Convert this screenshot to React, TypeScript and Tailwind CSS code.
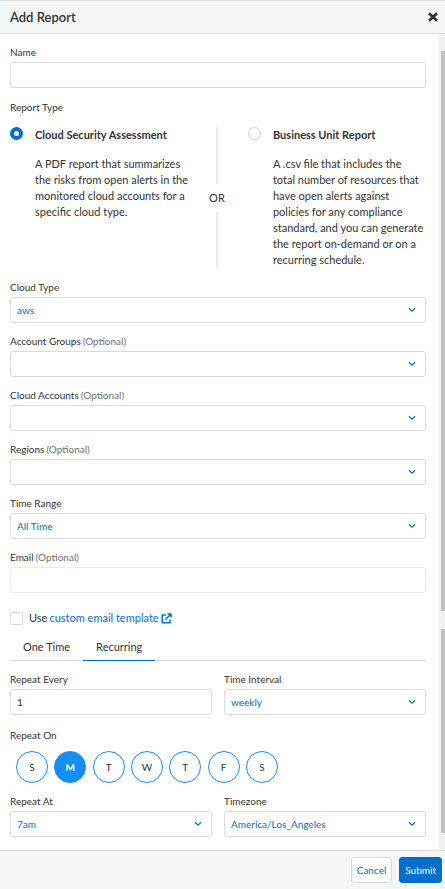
import { useState } from "react";
import type { ReactNode } from "react";

const BOX =
  "block h-[26px] w-full rounded-[3px] border bg-white px-1.5 text-[10px] leading-4 outline-none focus:border-[#148ef5]";

function Label({ id, text, optional }: { id: string; text: string; optional?: boolean }) {
  return (
    <label htmlFor={id} className="block text-[10px] leading-4 text-[#333333]">
      {text}
      {optional && <span className="ml-0.5 text-[#707070]">(Optional)</span>}
    </label>
  );
}

function TextField(props: { id: string; label: string; optional?: boolean; value?: string; faint?: boolean }) {
  return (
    <div className="flex flex-col gap-0.5">
      <Label id={props.id} text={props.label} optional={props.optional} />
      <input
        id={props.id}
        type="text"
        defaultValue={props.value}
        className={`${BOX} text-[#333333] ${props.faint ? "border-[#ebebeb]" : "border-[#d9dada]"}`}
      />
    </div>
  );
}

function SelectField(props: { id: string; label: string; optional?: boolean; value?: string }) {
  return (
    <div className="flex flex-col gap-0.5">
      <Label id={props.id} text={props.label} optional={props.optional} />
      <div className="relative">
        <select
          id={props.id}
          defaultValue={props.value ?? ""}
          className={`${BOX} appearance-none border-[#d9dada] text-[#006fcc]`}
        >
          <option value={props.value ?? ""}>{props.value ?? ""}</option>
        </select>
        <svg
          viewBox="0 0 8 6"
          className="pointer-events-none absolute top-2.5 right-2.5 h-1.5 w-2"
          fill="none"
          stroke="#006fcc"
          strokeWidth="1.3"
        >
          <path d="M1 1.2 4 4.2 7 1.2" />
        </svg>
      </div>
    </div>
  );
}

function ReportOption(props: { id: string; title: string; checked: boolean; onPick: () => void; children: ReactNode }) {
  return (
    <div className="flex items-start gap-3">
      <input
        id={props.id}
        type="radio"
        name="report-type"
        checked={props.checked}
        onChange={props.onPick}
        className="size-[13px] shrink-0 appearance-none rounded-full border border-[#d0d0d0] bg-white checked:border-4 checked:border-[#006fcc]"
      />
      <div className="min-w-0 text-[11px] leading-4 text-[#333333]">
        <label htmlFor={props.id} className="block font-bold">
          {props.title}
        </label>
        <p className="mt-[13px]">{props.children}</p>
      </div>
    </div>
  );
}

function Scrollbar() {
  return (
    <div aria-hidden="true" className="flex w-1.5 shrink-0 flex-col bg-[#f0f0f0] pt-[17px] pb-[17px] pl-0.5">
      <div className="grow-[560] bg-[#c1c1c1]" />
      <div className="h-[18px]" />
      <div className="grow-[204] bg-[#c1c1c1]" />
    </div>
  );
}

const DAYS = ["S", "M", "T", "W", "T", "F", "S"];

export default function App() {
  const [report, setReport] = useState("cloud");
  const [tab, setTab] = useState("Recurring");
  const [days, setDays] = useState([1]);

  const toggleDay = (day: number) =>
    setDays(days.includes(day) ? days.filter((d) => d !== day) : [...days, day]);

  return (
    <div className="flex min-h-screen flex-col bg-white font-['Lato',sans-serif] text-[#333333]">
      <header className="flex h-[34px] items-center justify-between border-y border-[#d9dada] bg-[#f4f5f5] pr-[7px] pl-2.5">
        <h1 className="text-[13px] leading-5 font-semibold">Add Report</h1>
        <button type="button" aria-label="Close" className="p-0">
          <svg viewBox="0 0 10 10" className="size-2.5" fill="none" stroke="#333333" strokeWidth="2.6">
            <path d="M1 1.2 9 8.8M9 1.2 1 8.8" />
          </svg>
        </button>
      </header>

      <div className="flex grow">
        <main className="flex min-w-0 grow flex-col pt-2.5 pr-[13px] pb-3 pl-2.5">
          <TextField id="name" label="Name" />

          <fieldset className="mt-[11px]">
            <legend className="text-[10px] leading-4">Report Type</legend>
            <div className="mt-3 flex">
              <div className="min-w-0 flex-[19]">
                <ReportOption
                  id="type-cloud"
                  title="Cloud Security Assessment"
                  checked={report === "cloud"}
                  onPick={() => setReport("cloud")}
                >
                  A PDF report that summarizes the risks from open alerts in the monitored cloud accounts for a
                  specific cloud type.
                </ReportOption>
              </div>
              <div className="mr-[19px] ml-[7px] flex w-6 shrink-0 flex-col items-center text-[11px] leading-4">
                <div className="w-0.5 grow bg-[#ebebeb]" />
                <span className="py-1.5">OR</span>
                <div className="w-0.5 grow bg-[#ebebeb]" />
              </div>
              <div className="min-w-0 flex-[18]">
                <ReportOption
                  id="type-unit"
                  title="Business Unit Report"
                  checked={report === "unit"}
                  onPick={() => setReport("unit")}
                >
                  A .csv file that includes the total number of resources that have open alerts against policies for
                  any compliance standard, and you can generate the report on-demand or on a recurring schedule.
                </ReportOption>
              </div>
            </div>
          </fieldset>

          <div className="mt-[11px] flex flex-col gap-2.5">
            <SelectField id="cloud-type" label="Cloud Type" value="aws" />
            <SelectField id="groups" label="Account Groups" optional />
            <SelectField id="accounts" label="Cloud Accounts" optional />
            <SelectField id="regions" label="Regions" optional />
            <SelectField id="range" label="Time Range" value="All Time" />
            <TextField id="email" label="Email" optional faint />
          </div>

          <div className="mt-[17px] flex h-4 items-center gap-1.5 text-[11px] leading-4">
            <input
              id="template"
              type="checkbox"
              className="size-[13px] appearance-none rounded-[1px] border border-[#d9dada] bg-white checked:bg-[#006fcc]"
            />
            <label htmlFor="template">Use</label>
            <a href="#template" className="-ml-1 flex items-center gap-0.5 text-[#006fcc]">
              custom email template
              <svg viewBox="0 0 11 11" className="size-[11px]" fill="none" stroke="currentColor" strokeWidth="1.5">
                <path d="M5 2H1.2v7.8H9V6.5M6.5 1H10v3.5M10 1 4.5 6.5" />
              </svg>
            </a>
          </div>

          <div role="tablist" className="mt-[7px] flex border-b border-[#d9dada]">
            {["One Time", "Recurring"].map((name) => (
              <button
                key={name}
                type="button"
                role="tab"
                aria-selected={tab === name}
                onClick={() => setTab(name)}
                className={`-mb-px h-[28px] border-b px-[13px] text-[11px] leading-4 ${
                  tab === name ? "border-[#006fcc]" : "border-transparent"
                }`}
              >
                {name}
              </button>
            ))}
          </div>

          <div className="mt-2.5 grid grid-cols-2 gap-3">
            <TextField id="every" label="Repeat Every" value="1" />
            <SelectField id="interval" label="Time Interval" value="weekly" />
          </div>

          <fieldset className="mt-3">
            <legend className="text-[10px] leading-4">Repeat On</legend>
            <div className="mt-2 ml-1.5 flex w-[262px] justify-between">
              {DAYS.map((day, i) => (
                <button
                  key={i}
                  type="button"
                  aria-pressed={days.includes(i)}
                  onClick={() => toggleDay(i)}
                  className={`size-8 rounded-full border border-[#148ef5] text-[10px] leading-4 ${
                    days.includes(i) ? "bg-[#148ef5] font-bold text-white" : "bg-white"
                  }`}
                >
                  {day}
                </button>
              ))}
            </div>
          </fieldset>

          <div className="mt-2.5 grid grid-cols-2 gap-3">
            <SelectField id="at" label="Repeat At" value="7am" />
            <SelectField id="zone" label="Timezone" value="America/Los_Angeles" />
          </div>
        </main>
        <Scrollbar />
      </div>

      <footer className="flex justify-end gap-[7px] border-t border-[#d9dada] bg-[#f4f5f5] py-1.5 pr-[3px] text-[10px] leading-4">
        <button type="button" className="h-[26px] rounded-[3px] border border-[#d9dada] bg-white px-[5px] text-[#006fcc]">
          Cancel
        </button>
        <button type="button" className="h-[26px] rounded-[3px] border border-[#006fcc] bg-[#006fcc] px-[5px] text-white">
          Submit
        </button>
      </footer>
    </div>
  );
}
